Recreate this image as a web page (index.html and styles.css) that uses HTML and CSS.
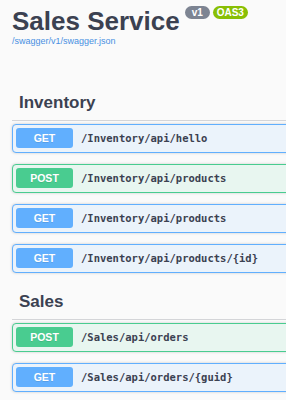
FILE: index.html
```html
<!DOCTYPE html>
<html lang="en">
<head>
    <meta charset="UTF-8">
    <meta name="viewport" content="width=device-width, initial-scale=1.0">
    <title>Sales Service</title>
    <link rel="stylesheet" href="styles.css">
</head>
<body>
    <div class="page">
        <div class="wrapper">
            <div class="info">
                <div class="title-row">
                    <h2 class="title">Sales Service</h2>
                    <span class="badge badge-version">v1</span>
                    <span class="badge badge-oas">OAS3</span>
                </div>
                <a class="spec-link" href="#">/swagger/v1/swagger.json</a>
            </div>

            <div class="tag-section">
                <h3 class="tag-heading">Inventory</h3>
                <div class="opblock opblock-get">
                    <span class="method">GET</span>
                    <span class="path">/Inventory/api/hello</span>
                </div>
                <div class="opblock opblock-post">
                    <span class="method">POST</span>
                    <span class="path">/Inventory/api/products</span>
                </div>
                <div class="opblock opblock-get">
                    <span class="method">GET</span>
                    <span class="path">/Inventory/api/products</span>
                </div>
                <div class="opblock opblock-get">
                    <span class="method">GET</span>
                    <span class="path">/Inventory/api/products/{id}</span>
                </div>
            </div>

            <div class="tag-section">
                <h3 class="tag-heading">Sales</h3>
                <div class="opblock opblock-post">
                    <span class="method">POST</span>
                    <span class="path">/Sales/api/orders</span>
                </div>
                <div class="opblock opblock-get">
                    <span class="method">GET</span>
                    <span class="path">/Sales/api/orders/{guid}</span>
                </div>
            </div>
        </div>
    </div>
</body>
</html>
```

FILE: styles.css
```css
/* Global Styling */
body {
    font-family: 'Liberation Sans', Arial, sans-serif;
    margin: 0;
    padding: 0;
    background: #fafafa;
    color: #3b4151;
}

/* the page is wider than the window, clip it on the right */
.page {
    width: 100%;
    overflow: hidden;
}

.wrapper {
    width: 360px;
    padding: 0 0 0 12px;
}

/* Info header */
.info {
    padding-top: 6px;
    margin-bottom: 38px;
}

.title-row {
    display: flex;
    align-items: flex-start;
}

.title {
    font-size: 26px;
    line-height: 26px;
    font-weight: bold;
    margin: 2px 0 0 0;
}

.badge {
    box-sizing: border-box;
    height: 13px;
    line-height: 13px;
    padding: 0 4px;
    margin-left: 3px;
    border-radius: 7px;
    color: #fff;
    font-size: 10px;
    font-weight: bold;
    text-align: center;
}

.badge-version {
    min-width: 25px;
    margin-left: 5px;
    background: #7d8492;
}

.badge-oas {
    background: #89bf04;
}

.spec-link {
    display: block;
    margin-top: 2px;
    font-size: 9px;
    line-height: 11px;
    color: #4990e2;
    text-decoration: none;
}

/* Tag sections */
.tag-heading {
    font-size: 17px;
    line-height: 17px;
    font-weight: bold;
    margin: 0 0 3px 0;
    padding: 9px 0 9px 7px;
    border-bottom: 1px solid rgba(59, 65, 81, 0.2);
}

.opblock {
    display: flex;
    align-items: center;
    padding: 3px 3px 4px;
    margin-bottom: 11px;
    border: 1px solid;
    border-radius: 4px;
    box-shadow: 0 0 3px rgba(0, 0, 0, 0.19);
}

.method {
    width: 57px;
    height: 20px;
    line-height: 20px;
    border-radius: 3px;
    color: #fff;
    font-size: 10.5px;
    font-weight: bold;
    text-align: center;
    text-shadow: 0 1px 0 rgba(0, 0, 0, 0.1);
}

.path {
    margin-left: 8px;
    font-family: 'DejaVu Sans Mono', monospace;
    font-size: 10.5px;
    font-weight: bold;
    color: #3b4151;
}

.opblock-get {
    background: #ebf3fb;
    border-color: #61affe;
}

.opblock-get .method {
    background: #61affe;
}

.opblock-post {
    background: #e8f6f0;
    border-color: #49cc90;
}

.opblock-post .method {
    background: #49cc90;
}
```
